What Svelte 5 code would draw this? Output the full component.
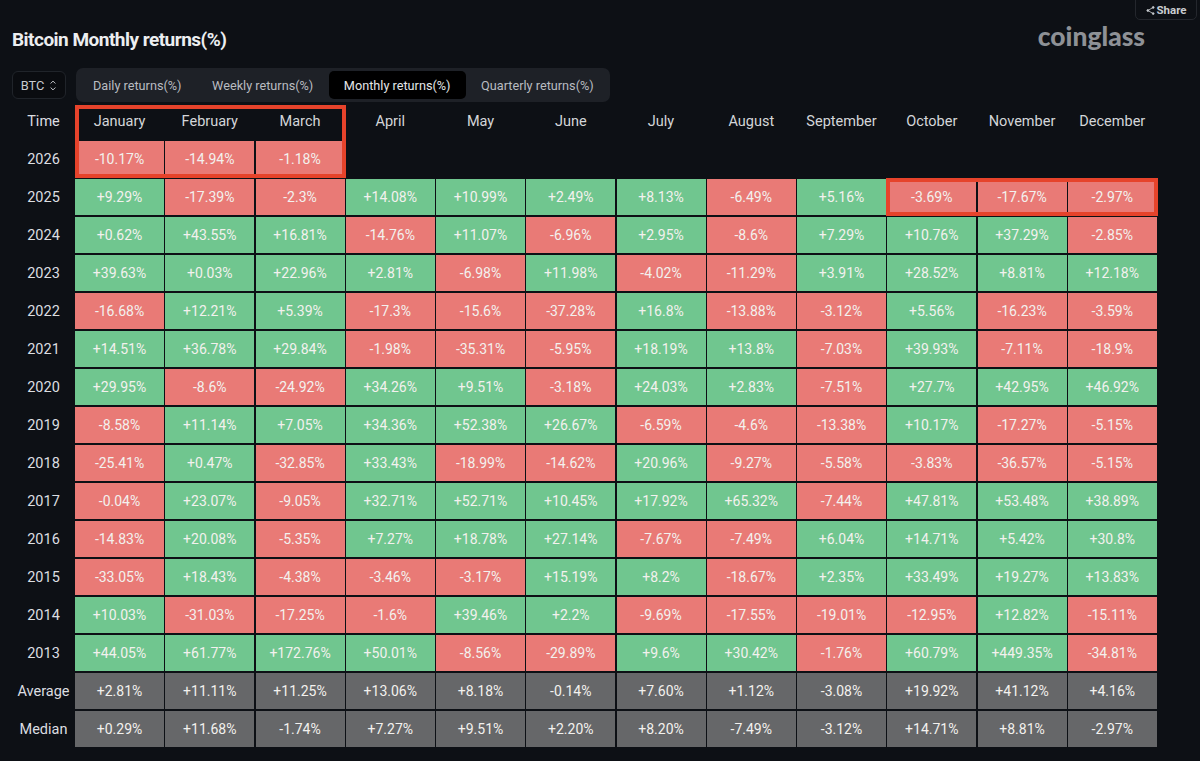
<script>
  const months = ['January','February','March','April','May','June','July','August','September','October','November','December'];
  const tabs = ['Daily returns(%)','Weekly returns(%)','Monthly returns(%)','Quarterly returns(%)'];
  const rows = [
    ['2026','-10.17%','-14.94%','-1.18%'],
    ['2025','+9.29%','-17.39%','-2.3%','+14.08%','+10.99%','+2.49%','+8.13%','-6.49%','+5.16%','-3.69%','-17.67%','-2.97%'],
    ['2024','+0.62%','+43.55%','+16.81%','-14.76%','+11.07%','-6.96%','+2.95%','-8.6%','+7.29%','+10.76%','+37.29%','-2.85%'],
    ['2023','+39.63%','+0.03%','+22.96%','+2.81%','-6.98%','+11.98%','-4.02%','-11.29%','+3.91%','+28.52%','+8.81%','+12.18%'],
    ['2022','-16.68%','+12.21%','+5.39%','-17.3%','-15.6%','-37.28%','+16.8%','-13.88%','-3.12%','+5.56%','-16.23%','-3.59%'],
    ['2021','+14.51%','+36.78%','+29.84%','-1.98%','-35.31%','-5.95%','+18.19%','+13.8%','-7.03%','+39.93%','-7.11%','-18.9%'],
    ['2020','+29.95%','-8.6%','-24.92%','+34.26%','+9.51%','-3.18%','+24.03%','+2.83%','-7.51%','+27.7%','+42.95%','+46.92%'],
    ['2019','-8.58%','+11.14%','+7.05%','+34.36%','+52.38%','+26.67%','-6.59%','-4.6%','-13.38%','+10.17%','-17.27%','-5.15%'],
    ['2018','-25.41%','+0.47%','-32.85%','+33.43%','-18.99%','-14.62%','+20.96%','-9.27%','-5.58%','-3.83%','-36.57%','-5.15%'],
    ['2017','-0.04%','+23.07%','-9.05%','+32.71%','+52.71%','+10.45%','+17.92%','+65.32%','-7.44%','+47.81%','+53.48%','+38.89%'],
    ['2016','-14.83%','+20.08%','-5.35%','+7.27%','+18.78%','+27.14%','-7.67%','-7.49%','+6.04%','+14.71%','+5.42%','+30.8%'],
    ['2015','-33.05%','+18.43%','-4.38%','-3.46%','-3.17%','+15.19%','+8.2%','-18.67%','+2.35%','+33.49%','+19.27%','+13.83%'],
    ['2014','+10.03%','-31.03%','-17.25%','-1.6%','+39.46%','+2.2%','-9.69%','-17.55%','-19.01%','-12.95%','+12.82%','-15.11%'],
    ['2013','+44.05%','+61.77%','+172.76%','+50.01%','-8.56%','-29.89%','+9.6%','+30.42%','-1.76%','+60.79%','+449.35%','-34.81%'],
    ['Average','+2.81%','+11.11%','+11.25%','+13.06%','+8.18%','-0.14%','+7.60%','+1.12%','-3.08%','+19.92%','+41.12%','+4.16%'],
    ['Median','+0.29%','+11.68%','-1.74%','+7.27%','+9.51%','+2.20%','+8.20%','-7.49%','-3.12%','+14.71%','+8.81%','-2.97%']
  ];
  const tone = (label, v) => (label === 'Average' || label === 'Median') ? 'gray' : v.startsWith('-') ? 'red' : 'green';
</script>

<div class="page">
  <div class="topbar">
    <button class="share">
      <svg viewBox="0 0 10 10" width="9" height="9" fill="none" stroke="currentColor" stroke-width="0.9"><path d="M8 1.6 2 5l6 3.4"/><circle cx="8" cy="1.6" r="1" fill="currentColor"/><circle cx="2" cy="5" r="1" fill="currentColor"/><circle cx="8" cy="8.4" r="1" fill="currentColor"/></svg>
      Share
    </button>
  </div>
  <div class="head">
    <h1>Bitcoin Monthly returns(%)</h1>
    <div class="logo">coinglass</div>
  </div>
  <div class="controls">
    <div class="select">BTC
      <svg viewBox="0 0 10 16" width="8" height="13" fill="none" stroke="currentColor" stroke-width="1.2"><path d="M2 5.5 5 2.5l3 3M2 10.5l3 3 3-3"/></svg>
    </div>
    <div class="tabs">
      {#each tabs as t, i}
        <div class="tab" class:active={i === 2}>{t}</div>
      {/each}
    </div>
  </div>
  <div class="grid">
    <div class="label">Time</div>
    {#each months as m}<div class="month">{m}</div>{/each}
    {#each rows as r}
      <div class="label">{r[0]}</div>
      {#each r.slice(1) as v}<div class="cell {tone(r[0], v)}">{v}</div>{/each}
      {#each Array(13 - r.length) as _}<div></div>{/each}
    {/each}
    <div class="mark mark-q1"></div>
    <div class="mark mark-q4"></div>
  </div>
</div>

<style>
  :global(body) { margin: 0; background: #0d1015; }
  .page {
    width: 1200px; height: 761px; box-sizing: border-box; overflow: hidden;
    padding: 0 42px 0 0; background: #0d1015; color: #dfe1e4;
    font-family: Roboto, "Liberation Sans", sans-serif; font-size: 14.5px;
  }
  .topbar { display: flex; justify-content: flex-end; height: 20px; margin-right: -39px; }
  .share {
    display: flex; align-items: center; justify-content: center; gap: 2px;
    width: 62px; height: 28px; margin-top: -8px; box-sizing: border-box; padding: 8px 0 0;
    background: #0d1015; border: 1px solid #24272d; border-radius: 5px;
    color: #c9ccd0; font: 700 11.5px Roboto, sans-serif;
  }
  .head { display: flex; align-items: center; height: 38px; padding-left: 12px; }
  .head h1 { margin: 0 auto 0 0; font-size: 19px; font-weight: 700; letter-spacing: -0.52px; color: #eceef0; }
  .logo { margin-top: -6px; margin-right: 13px; font: 900 26.4px Lato, sans-serif; color: #8e9196; }
  .controls { display: flex; align-items: center; gap: 10px; height: 34px; margin-top: 10px; padding-left: 12px; }
  .select {
    display: flex; align-items: center; justify-content: center; gap: 5px;
    width: 54px; height: 28px; box-sizing: border-box;
    background: #0a0c10; border: 1px solid #20242a; border-radius: 6px; font-size: 12.8px; color: #c8cbcf;
  }
  .tabs { display: flex; width: 534px; height: 34px; box-sizing: border-box; padding: 3px 2px; background: #1e2127; border-radius: 7px; }
  .tab { display: flex; align-items: center; justify-content: center; flex: none; padding: 0 15.6px 0 15px; font-size: 12.7px; color: #b9bcc1; border-radius: 5px; }
  .tab.active { background: #000; color: #e4e6e8; }
  .grid {
    position: relative; display: grid; margin-top: 1px;
    grid-template-columns: 75px repeat(12, 1fr); grid-auto-rows: 36px; row-gap: 2px;
  }
  .label, .month, .cell { display: flex; align-items: center; justify-content: center; white-space: nowrap; }
  .label { color: #dcdee1; padding-left: 12px; }
  .month { color: #d4d6d9; margin-right: 1.2px; }
  .cell { margin-right: 1.2px; font-size: 14px; color: #f3f1ee; }
  .green { background: #70c68f; }
  .red { background: #e97a76; }
  .gray { background: #666769; }
  .mark { position: absolute; box-sizing: border-box; border: 4px solid #e6432b; pointer-events: none; }
  .mark-q1 { grid-column: 2 / 5; grid-row: 1 / 3; top: 2px; bottom: -1px; right: 0; left: 0; }
  .mark-q4 { grid-column: 11 / 14; grid-row: 3 / 4; top: -1px; bottom: -1px; left: -1px; right: 0; }
</style>
